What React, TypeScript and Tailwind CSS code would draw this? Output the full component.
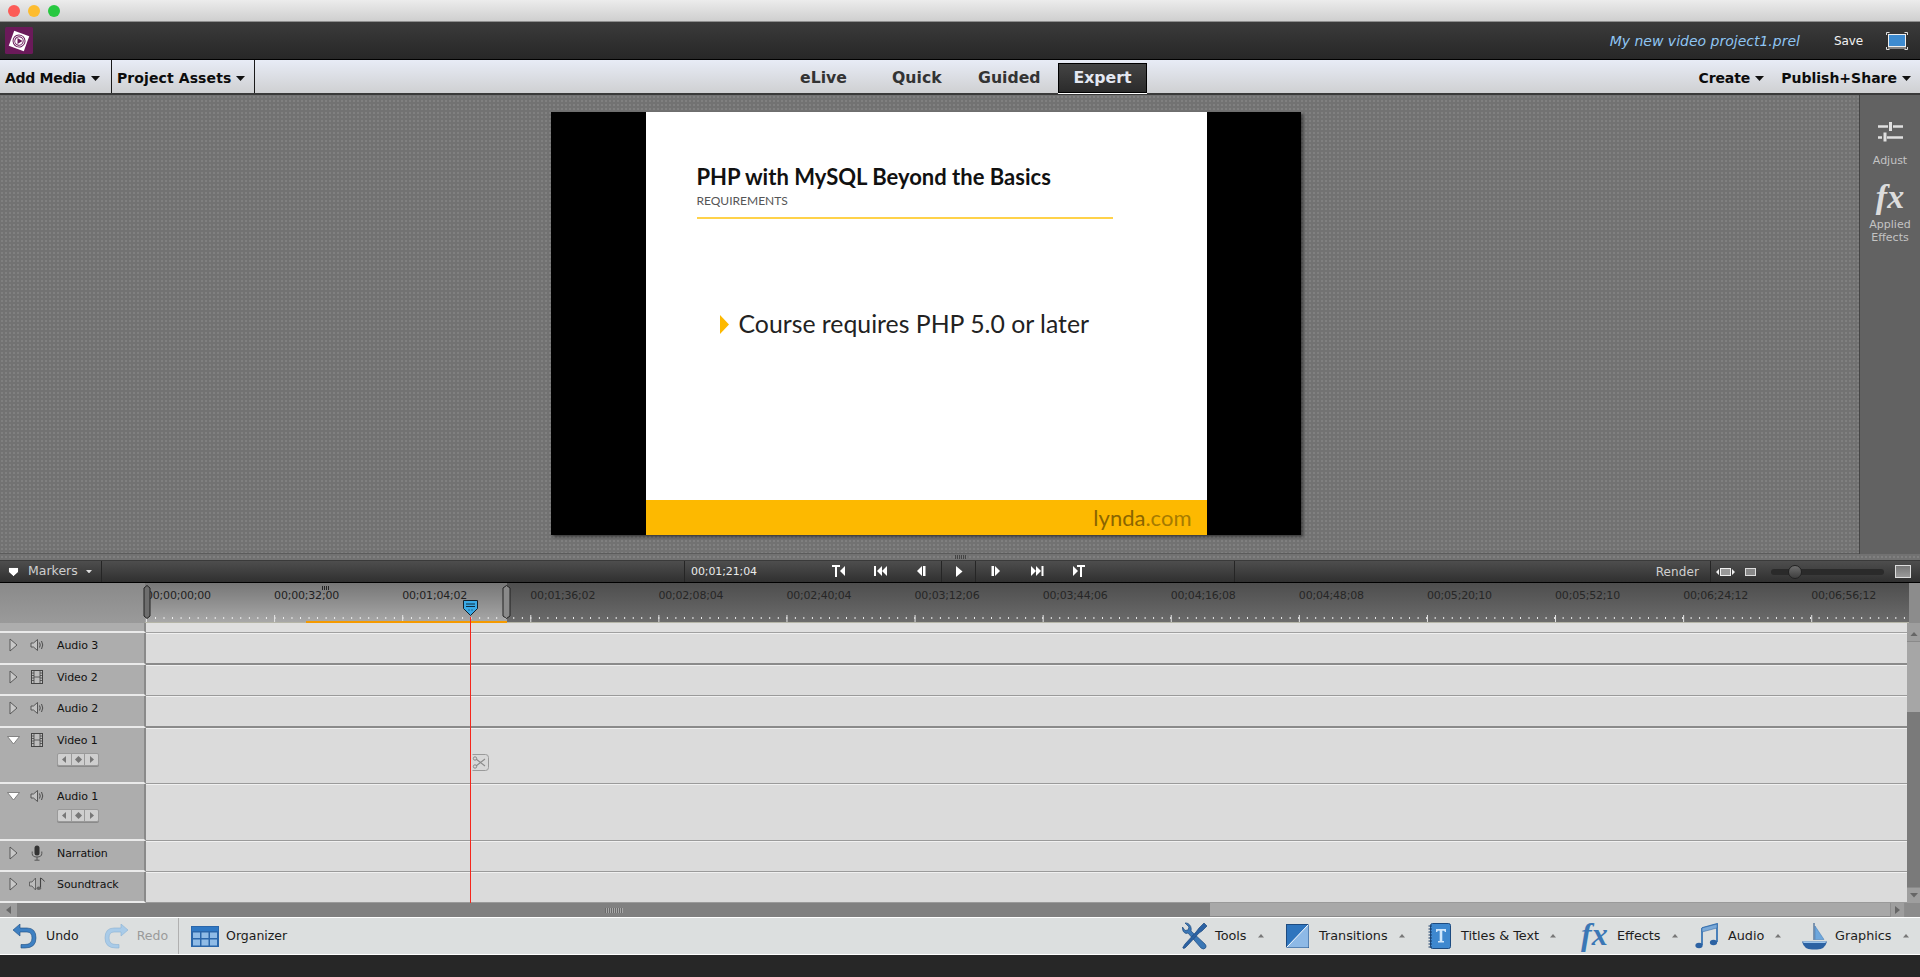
import React from "react";

const Caret = ({ c = "#111", w = 9, up = false }: { c?: string; w?: number; up?: boolean }) => (
  <svg width={w} height={w / 2 + 0.5} viewBox="0 0 10 5.5" className="shrink-0">
    <path d={up ? "M0 5.5L5 0L10 5.5Z" : "M0 0L10 0L5 5.5Z"} fill={c} />
  </svg>
);

const Logo = () => (
  <svg width="28" height="27" viewBox="0 0 28 27">
    <rect width="28" height="27" rx="1.5" fill="#6b1a5a" />
    <g transform="rotate(20 14 14)">
      <rect x="6" y="6" width="16" height="16" fill="#fff" />
      <circle cx="14" cy="14" r="6" fill="none" stroke="#6b1a5a" strokeWidth="1" />
      <circle cx="14" cy="14" r="4.2" fill="none" stroke="#6b1a5a" strokeWidth="1" />
    </g>
    <path d="M12.5 11L17.5 14L12.5 17Z" fill="#6b1a5a" />
  </svg>
);

const ScreenIcon = () => (
  <svg width="22" height="18" viewBox="0 0 22 18">
    <path d="M0.5 3V0.5H3.5M18.5 0.5H21.5V3M0.5 15V17.5H3.5M18.5 17.5H21.5V15" fill="none" stroke="#ddd" />
    <rect x="2.5" y="2.5" width="17" height="12" fill="#3d8bd0" stroke="#eee" />
    <rect x="2" y="15.5" width="18" height="1" fill="#ddd" />
  </svg>
);

const Speaker = () => (
  <svg width="15" height="14" viewBox="0 0 15 14">
    <path d="M1 5H3.5L7.5 1.5V12.5L3.5 9H1Z" fill="#c2c2c2" stroke="#4c4c4c" strokeWidth="0.9" />
    <path d="M9.5 4.5Q11 7 9.5 9.5M11.5 3Q14 7 11.5 11" fill="none" stroke="#4c4c4c" strokeWidth="1" />
  </svg>
);
const Film = () => (
  <svg width="12" height="14" viewBox="0 0 12 14">
    <rect x="0.5" y="0.5" width="11" height="13" fill="#bdbdbd" stroke="#444" />
    <path d="M3 0.5V13.5M9 0.5V13.5M3 7H9M0.5 3H3M0.5 5.5H3M0.5 8H3M0.5 10.5H3M9 3H11.5M9 5.5H11.5M9 8H11.5M9 10.5H11.5" stroke="#444" strokeWidth="0.8" fill="none" />
  </svg>
);
const Mic = () => (
  <svg width="12" height="16" viewBox="0 0 12 16">
    <rect x="3.5" y="0.5" width="5" height="10" rx="2.5" fill="#333" />
    <path d="M1.2 6.5V8.5Q1.2 12 6 12Q10.8 12 10.8 8.5V6.5M6 12V15M3.5 15.2H8.5" stroke="#555" fill="none" />
  </svg>
);
const Soundtrack = () => (
  <svg width="17" height="14" viewBox="0 0 17 14">
    <path d="M0.5 5H3L6.5 1V13L3 9H0.5Z" fill="#bcbcbc" stroke="#5c5c5c" strokeWidth="0.9" />
    <path d="M11.5 1V11" stroke="#444" strokeWidth="1.1" />
    <ellipse cx="9.8" cy="11.3" rx="2.3" ry="1.8" fill="#666" />
    <path d="M11.5 1Q14 2 15.5 4.5" stroke="#444" fill="none" />
  </svg>
);
const OpenTri = () => (
  <svg width="9" height="14" viewBox="0 0 9 14">
    <path d="M1 1L8 7L1 13Z" fill="#c8c8c8" stroke="#4e4e4e" strokeWidth="0.9" />
  </svg>
);
const DownTri = () => (
  <svg width="13" height="9" viewBox="0 0 13 9">
    <path d="M0.5 0.5H12.5L6.5 8Z" fill="#fff" stroke="#6e6e6e" strokeWidth="0.8" />
  </svg>
);
const Keys = () => (
  <div className="flex h-[13px] w-[42px] rounded-[2px] border border-[#9a9a9a] bg-[#cfcfcf] shadow-[0_1px_0_#8a8a8a]">
    <div className="flex flex-1 items-center justify-center border-r border-[#9a9a9a]">
      <svg width="4" height="7" viewBox="0 0 4 7"><path d="M4 0V7L0 3.5Z" fill="#777" /></svg>
    </div>
    <div className="flex flex-1 items-center justify-center border-r border-[#9a9a9a]">
      <svg width="7" height="7" viewBox="0 0 7 7"><path d="M3.5 0L7 3.5L3.5 7L0 3.5Z" fill="#777" /></svg>
    </div>
    <div className="flex flex-1 items-center justify-center">
      <svg width="4" height="7" viewBox="0 0 4 7"><path d="M0 0V7L4 3.5Z" fill="#777" /></svg>
    </div>
  </div>
);

const T = ({ d, w = 14 }: { d: React.ReactNode; w?: number }) => (
  <svg width={w} height="13" viewBox={`0 0 ${w} 13`} fill="#fff">{d}</svg>
);

const Transport = ({ w, children, cls = "" }: { w: string; children: React.ReactNode; cls?: string }) => (
  <div className={`flex h-full items-center justify-center ${w} ${cls}`}>{children}</div>
);

const Label = ({ children, dark = false }: { children: string; dark?: boolean }) => (
  <div className={`w-[128.1px] shrink-0 text-[11px] leading-none tracking-[-0.2px] ${dark ? "text-[#262626]" : "text-[#1f1f1f]"}`}>
    {children}
  </div>
);

const Row = ({
  h, line, icon, tri, name, keys = false,
}: { h: string; line: string; icon: React.ReactNode; tri: React.ReactNode; name: string; keys?: boolean }) => (
  <div className={`flex ${h}`}>
    <div className="w-[146px] shrink-0 border-r-2 border-b-2 border-r-[#8a8a8a] border-b-[#eaeaea] bg-[#adadad]">
      <div className="flex h-[24px] items-center">
        <div className="flex w-[26px] justify-center">{tri}</div>
        <div className="flex w-[22px] justify-center">{icon}</div>
        <div className="ml-[9px] text-[11px] leading-none tracking-[-0.1px] text-[#111]">{name}</div>
      </div>
      {keys && <div className="ml-[57px] mt-[1px]"><Keys /></div>}
    </div>
    <div className={`flex-1 border-t border-t-[#f0f0f0] bg-[#dbdbdb] ${line}`} />
  </div>
);

const Wrench = () => (
  <svg width="26" height="28" viewBox="0 0 26 28">
    <path d="M3 1L7 5L6 8L3 8.5L0.5 5Q0 10 4 11.5L6 11L19 26Q21.5 28 23.5 26Q25 24 23 22L9 9Q10 4 6 1.5Q4.5 0.8 3 1Z" fill="#3b77b5" stroke="#1e4a80" strokeWidth="0.7" />
    <path d="M22 1L25 4L20 9L17 11L6 23L3 26Q1 27 0.8 25.5L3 22L14 10L17 6Z" fill="#2c62a3" stroke="#1e4a80" strokeWidth="0.7" />
  </svg>
);
const TransIcon = () => (
  <svg width="23" height="24" viewBox="0 0 23 24">
    <rect x="0.5" y="0.5" width="22" height="23" fill="#2e75be" stroke="#1d4b80" />
    <path d="M22.5 0.5V23.5H0.5Z" fill="#8db9e6" />
    <path d="M22.5 0.5L0.5 23.5" stroke="#fff" />
  </svg>
);
const TitleIcon = () => (
  <svg width="23" height="26" viewBox="0 0 23 26">
    <rect x="2.5" y="0.5" width="20" height="25" rx="2" fill="#3e88cf" stroke="#1d4b80" />
    <path d="M8 6H18V9H17L16 7.8H14.3V18H16V19.5H10V18H11.7V7.8H10L9 9H8Z" fill="#cfe6fb" />
    <path d="M0.5 3H4M0.5 6H4M0.5 9H4M0.5 12H4M0.5 15H4M0.5 18H4M0.5 21H4M0.5 24H4" stroke="#163a66" />
  </svg>
);
const Note = () => (
  <svg width="23" height="26" viewBox="0 0 23 26">
    <path d="M7 5L22 1V19" fill="none" stroke="#3b77b5" strokeWidth="1.8" />
    <path d="M7 5V22" stroke="#3b77b5" strokeWidth="1.8" />
    <path d="M7 5L22 1V5L7 9Z" fill="#7aa9d8" stroke="#2c62a3" strokeWidth="0.5" />
    <ellipse cx="4" cy="22.5" rx="3.6" ry="2.8" fill="#2c62a3" />
    <ellipse cx="18.5" cy="19.5" rx="3.6" ry="2.8" fill="#2c62a3" />
  </svg>
);
const Boat = () => (
  <svg width="25" height="27" viewBox="0 0 25 27">
    <path d="M12 0V17" stroke="#1d4b80" strokeWidth="1" />
    <path d="M13 3L22 16.5H13Z" fill="#6ea7dc" stroke="#3b77b5" strokeWidth="0.5" />
    <path d="M0 18.5H25Q23 26.5 15 26.5H10Q2 26.5 0 18.5Z" fill="#2c62a3" />
    <path d="M1 18.5H24L23.5 20H1.5Z" fill="#9cc4ea" />
  </svg>
);

const ToolItem = ({ w, icon, label, box = "w-[33px]" }: { w: string; icon: React.ReactNode; label: string; box?: string }) => (
  <div className={`flex items-center ${w}`}>
    <div className={`flex shrink-0 items-center ${box}`}>{icon}</div>
    <span className="text-[12.8px] leading-none text-[#1d1d1d]">{label}</span>
    <span className="ml-[11px]"><Caret c="#777" w={6} up /></span>
  </div>
);

export default function App() {
  return (
    <div className="relative flex h-[977px] w-[1920px] flex-col overflow-hidden bg-[#272727] font-['DejaVu_Sans',sans-serif]">
      {/* window title bar */}
      <div className="flex h-[22px] shrink-0 items-center gap-[8px] border-b border-[#8e8e8e] bg-gradient-to-b from-[#ececec] to-[#cfcfcf] pl-[8px]">
        <div className="h-[12px] w-[12px] rounded-full bg-[#fc5b57]" />
        <div className="h-[12px] w-[12px] rounded-full bg-[#fdbc2f]" />
        <div className="h-[12px] w-[12px] rounded-full bg-[#27c840]" />
      </div>

      {/* dark app bar */}
      <div className="flex h-[38px] shrink-0 items-center border-b border-black bg-gradient-to-b from-[#3b3b3b] to-[#272727] pl-[5px] pr-[12px]">
        <Logo />
        <span className="ml-auto text-[14px] italic leading-none text-[#8fc5f2]">My new video project1.prel</span>
        <span className="ml-[34px] text-[12px] leading-none tracking-[-0.1px] text-[#f2f2f2]">Save</span>
        <span className="ml-[23px] flex"><ScreenIcon /></span>
      </div>

      {/* menu bar */}
      <div className="flex h-[35px] shrink-0 items-center border-b-2 border-[#3a3a3a] bg-gradient-to-b from-[#e8ecf6] to-[#cfd0d2] text-[14px] font-bold leading-none text-[#0c0c0c]">
        <div className="flex h-full w-[112px] items-center gap-[5px] border-r border-[#1a1a1a] pl-[5px] pt-[3px]">
          <span className="tracking-[-0.3px]">Add Media</span><Caret />
        </div>
        <div className="flex h-full w-[143px] items-center gap-[5px] border-r border-[#1a1a1a] pl-[5px] pt-[3px]">
          <span className="tracking-[0.1px]">Project Assets</span><Caret />
        </div>
        <div className="ml-[545px] flex items-center pt-[2px] text-[15.7px] text-[#333]">
          <span className="w-[92px]">eLive</span>
          <span className="w-[86px]">Quick</span>
          <span className="w-[80px]">Guided</span>
          <span className="flex h-[30px] w-[89px] items-center justify-center border border-black bg-gradient-to-b from-[#444] to-[#2b2b2b] text-[#e4e8f2] shadow-[0_1px_0_#fff]">Expert</span>
        </div>
        <div className="ml-auto flex items-center gap-[5px] pt-[3px]">
          <span className="tracking-[-0.1px]">Create</span><Caret />
        </div>
        <div className="ml-[17px] mr-[9px] flex items-center gap-[5px] pt-[3px]">
          <span>Publish+Share</span><Caret />
        </div>
      </div>

      {/* monitor */}
      <div className="flex h-[465px] shrink-0 flex-col bg-[#727272] bg-[radial-gradient(circle,#808080_1px,transparent_1.2px)] bg-[length:4px_4px]">
        <div className="flex h-[459px] border-b border-[#5c5c5c]">
          <div className="ml-[551px] mt-[17px] flex h-[423px] w-[750px] justify-center bg-black shadow-[2px_2px_3px_rgba(0,0,0,0.5)]">
            <div className="flex h-full w-[561px] flex-col bg-white font-['Lato',sans-serif]">
              <div className="flex-1 pl-[51px] pt-[52px]">
                <div className="text-[22px] font-bold leading-[26px] text-[#111]">PHP with MySQL Beyond the Basics</div>
                <div className="mt-[4px] text-[12px] leading-[14px] text-[#555]">REQUIREMENTS</div>
                <div className="mt-[9px] h-[2px] w-[416px] bg-[#ffd24a]" />
                <div className="ml-[23px] mt-[90px] flex items-center">
                  <svg width="9" height="19" viewBox="0 0 9 19"><path d="M0 0L9 9.5L0 19Z" fill="#fdb900" /></svg>
                  <span className="ml-[10px] text-[24.8px] leading-[30px] text-[#222]">Course requires PHP 5.0 or later</span>
                </div>
              </div>
              <div className="flex h-[35px] items-center justify-end bg-[#fdb900] pr-[15px] text-[22px] leading-none">
                <span className="text-[#8a6500]">lynda</span><span className="text-[#a67b00]">.com</span>
              </div>
            </div>
          </div>
          <div className="ml-auto flex h-[459px] w-[61px] flex-col items-center border-l border-[#444] bg-[#626262] pt-[27px] text-[11px] leading-[13px] text-[#c4c4c4]">
            <svg width="25" height="20" viewBox="0 0 25 20">
              <path d="M0 4.5H10M15 4.5H25M0 15.5H4M9 15.5H25" stroke="#e0e0e0" strokeWidth="2.5" />
              <rect x="11" y="0" width="3" height="9" fill="#e0e0e0" />
              <rect x="5.5" y="10.5" width="3" height="9" fill="#e0e0e0" />
            </svg>
            <span className="mt-[12px]">Adjust</span>
            <span className="mt-[14px] font-['Liberation_Serif',serif] text-[34px] font-bold italic leading-[32px] text-[#dcdcdc]">fx</span>
            <span className="mt-[5px] text-center">Applied<br />Effects</span>
          </div>
        </div>
        <div className="flex h-[5px] items-center justify-center">
          <div className="h-[4px] w-[11px] bg-[repeating-linear-gradient(90deg,#444_0_1px,transparent_1px_2px)]" />
        </div>
      </div>

      {/* timeline transport bar */}
      <div className="flex h-[23px] shrink-0 items-center border-y border-y-black border-t-[#3a3a3a] bg-gradient-to-b from-[#4e4e4e] to-[#303030] text-[#d8d8d8]">
        <div className="flex h-full w-[102px] items-center border-r border-[#252525] pl-[8px]">
          <svg width="11" height="10" viewBox="0 0 11 10"><path d="M0.5 0.5H10.5V5L5.5 9.5L0.5 5Z" fill="#fff" stroke="#111" strokeWidth="0.6" /></svg>
          <span className="ml-[9px] text-[12.5px] leading-none text-[#cfcfcf]">Markers</span>
          <span className="ml-[8px]"><Caret c="#ddd" w={6} /></span>
        </div>
        <div className="h-full w-[583px] border-r border-[#252525]" />
        <div className="flex h-full w-[133px] items-center pl-[6px] text-[11px] leading-none tracking-[-0.1px] text-[#eaeaea]">00;01;21;04</div>
        <Transport w="w-[42px]"><T d={<><path d="M0 0H8V2H5V12H3V2H0Z" /><path d="M13 1V11L8 6Z" /></>} /></Transport>
        <Transport w="w-[42px]"><T d={<><rect x="0" y="1" width="2" height="10" /><path d="M8 1V11L3 6Z" /><path d="M13 1V11L8 6Z" /></>} /></Transport>
        <Transport w="w-[39px]"><T w={10} d={<><path d="M5 1V11L0 6Z" /><rect x="6" y="1" width="2.5" height="10" /></>} /></Transport>
        <Transport w="w-[35px]" cls="border-x border-[#252525]"><T w={8} d={<path d="M1 1V12L7.5 6.5Z" />} /></Transport>
        <Transport w="w-[40px]"><T w={10} d={<><rect x="0.5" y="1" width="2.5" height="10" /><path d="M4 1V11L9 6Z" /></>} /></Transport>
        <Transport w="w-[42px]"><T d={<><path d="M1 1V11L6 6Z" /><path d="M6 1V11L11 6Z" /><rect x="11.5" y="1" width="2" height="10" /></>} /></Transport>
        <Transport w="w-[42px]"><T d={<><path d="M1 1V11L6 6Z" /><path d="M5 0H13V2H10V12H8V2H5Z" /></>} /></Transport>
        <div className="h-full w-[135px] border-r border-[#252525]" />
        <div className="flex h-full flex-1 items-center justify-end pr-[9px]">
          <span className="text-[12px] leading-none tracking-[0.1px] text-[#d0d0d0]">Render</span>
          <div className="ml-[11px] h-full border-r border-[#252525]" />
          <svg className="ml-[5px]" width="19" height="8" viewBox="0 0 19 8">
            <path d="M3 1V7L0 4ZM16 1V7L19 4Z" fill="#eee" />
            <rect x="4.5" y="0.5" width="10" height="7" fill="#999" stroke="#eee" />
          </svg>
          <div className="ml-[10px] h-[8px] w-[11px] border border-[#ddd] bg-[#888]" />
          <div className="relative ml-[15px] h-[6px] w-[113px] rounded-full bg-[#2a2a2a]">
            <div className="absolute left-[17px] top-[-4px] h-[14px] w-[14px] rounded-full border border-[#222] bg-gradient-to-b from-[#6e6e6e] to-[#3e3e3e]" />
          </div>
          <div className="ml-[11px] h-[13px] w-[16px] border border-[#ddd] bg-gradient-to-b from-[#777] to-[#9a9a9a]" />
        </div>
      </div>

      {/* timeline */}
      <div className="relative flex h-[320px] shrink-0 flex-col">
        {/* ruler */}
        <div className="flex h-[40px] shrink-0 bg-[#8c8c8c]">
          <div className="w-[145px] shrink-0 bg-gradient-to-b from-[#8a8a8a] to-[#9a9a9a]" />
          <div className="relative w-[1764px] shrink-0 bg-gradient-to-b from-[#4e4e4e] to-[#6c6c6c]">
            <div className="absolute inset-y-0 left-0 w-[362px] bg-gradient-to-b from-[#777] to-[#a9a9a9]" />
            <div className="relative flex pl-[1px] pt-[7px]">
              <Label>00;00;00;00</Label>
              <Label>00;00;32;00</Label>
              <Label>00;01;04;02</Label>
              <Label dark>00;01;36;02</Label>
              <Label dark>00;02;08;04</Label>
              <Label dark>00;02;40;04</Label>
              <Label dark>00;03;12;06</Label>
              <Label dark>00;03;44;06</Label>
              <Label dark>00;04;16;08</Label>
              <Label dark>00;04;48;08</Label>
              <Label dark>00;05;20;10</Label>
              <Label dark>00;05;52;10</Label>
              <Label dark>00;06;24;12</Label>
              <Label dark>00;06;56;12</Label>
            </div>
            <div className="absolute bottom-[4px] left-[9.5px] right-0 h-[2px] bg-[linear-gradient(90deg,#eee_1px,transparent_1px)] bg-[length:8.54px_2px]" />
            <div className="absolute bottom-[1px] left-[1px] right-0 h-[7px] bg-[linear-gradient(90deg,#e4e4e4_1px,transparent_1px)] bg-[length:128.1px_7px]" />
            <div className="absolute bottom-0 left-0 right-0 h-[1px] bg-[#b5b5a8]" />
            <div className="absolute bottom-0 left-[161px] h-[2px] w-[201px] bg-[#f59a00]" />
            {/* work area handles */}
            <svg className="absolute left-[-2px] top-[2px]" width="8" height="34" viewBox="0 0 8 34">
              <path d="M1 3L4 0.5L7 3V31L4 33.5L1 31Z" fill="#6e6e6e" stroke="#222" />
            </svg>
            <svg className="absolute left-[357px] top-[2px]" width="9" height="34" viewBox="0 0 9 34">
              <path d="M1 3L4.5 0.5L8 3V31L4.5 33.5L1 31Z" fill="#8a8a8a" stroke="#222" />
            </svg>
            <div className="absolute left-[177px] top-[3px] h-[4px] w-[8px] bg-[repeating-linear-gradient(90deg,#222_0_1px,transparent_1px_2px)]" />
          </div>
        </div>

        {/* tracks + vertical scrollbar */}
        <div className="flex h-[280px]">
          <div className="flex w-[1907px] shrink-0 flex-col">
            <div className="flex h-[10px]">
              <div className="w-[146px] shrink-0 border-r-2 border-b-2 border-r-[#8a8a8a] border-b-[#eaeaea] bg-[#adadad]" />
              <div className="flex-1 border-b border-[#a0a0a0] bg-[#dfdfdf]" />
            </div>
            <Row h="h-[32px]" line="border-b-2 border-b-[#8a8a8a]" tri={<OpenTri />} icon={<Speaker />} name="Audio 3" />
            <Row h="h-[31px]" line="border-b border-b-[#9a9a9a]" tri={<OpenTri />} icon={<Film />} name="Video 2" />
            <Row h="h-[32px]" line="border-b-2 border-b-[#8a8a8a]" tri={<OpenTri />} icon={<Speaker />} name="Audio 2" />
            <Row h="h-[56px]" line="border-b border-b-[#9a9a9a]" tri={<DownTri />} icon={<Film />} name="Video 1" keys />
            <Row h="h-[57px]" line="border-b border-b-[#9a9a9a]" tri={<DownTri />} icon={<Speaker />} name="Audio 1" keys />
            <Row h="h-[31px]" line="border-b border-b-[#9a9a9a]" tri={<OpenTri />} icon={<Mic />} name="Narration" />
            <Row h="h-[31px]" line="border-b border-b-[#9a9a9a]" tri={<OpenTri />} icon={<Soundtrack />} name="Soundtrack" />
          </div>
          <div className="flex w-[13px] shrink-0 flex-col bg-[#7a7a7a]">
            <div className="flex h-[18px] shrink-0 items-end justify-center bg-[#9e9e9e] pb-[5px]"><Caret c="#666" w={8} up /></div>
            <div className="h-[71px] shrink-0 border-t border-[#8a8a8a] bg-[#a6a6a6]" />
            <div className="mt-auto flex h-[16px] shrink-0 items-center justify-center border-t border-[#8a8a8a] bg-[#9e9e9e]"><Caret c="#666" w={8} /></div>
          </div>
        </div>

        {/* playhead */}
        <div className="absolute bottom-0 left-[470px] top-[34px] w-[1px] bg-[#f5261c]" />
        <svg className="absolute left-[463px] top-[17px]" width="15" height="16" viewBox="0 0 15 16">
          <path d="M0.5 0.5H14.5V8.5L7.5 15.5L0.5 8.5Z" fill="#39a9e6" stroke="#10202c" />
          <path d="M3 4H12M3 6.5H12" stroke="#0d2a3d" />
          <path d="M6 9V11M9 9V11" stroke="#1f6e9c" />
        </svg>
        <svg className="absolute left-[472px] top-[171px]" width="17" height="17" viewBox="0 0 17 17">
          <path d="M0.5 0.5H13.5Q16.5 0.5 16.5 3.5V13.5Q16.5 16.5 13.5 16.5H0.5" fill="#d8d8d8" stroke="#9a9a9a" />
          <path d="M4 5L13 12M4 12L13 5" stroke="#8a8a8a" strokeWidth="1.1" />
          <circle cx="3" cy="4.5" r="1.7" fill="none" stroke="#8a8a8a" />
          <circle cx="3" cy="12.5" r="1.7" fill="none" stroke="#8a8a8a" />
        </svg>
      </div>

      {/* horizontal scrollbar */}
      <div className="flex h-[14px] shrink-0 items-center bg-[#808080]">
        <div className="flex h-full w-[17px] items-center justify-center bg-[#9e9e9e]">
          <svg width="5" height="8" viewBox="0 0 5 8"><path d="M5 0V8L0 4Z" fill="#666" /></svg>
        </div>
        <div className="flex h-full w-[1193px] items-center pl-[588px]">
          <div className="h-[5px] w-[18px] bg-[#a8a8a8] bg-[repeating-linear-gradient(90deg,#6a6a6a_0_1px,transparent_1px_2px)]" />
        </div>
        <div className="h-full w-[680px] border-b border-[#8a8a8a] bg-[#a8a8a8]" />
        <div className="flex h-full w-[15px] items-center justify-center border-x border-[#8e8e8e] bg-[#9e9e9e]">
          <svg width="5" height="8" viewBox="0 0 5 8"><path d="M0 0V8L5 4Z" fill="#666" /></svg>
        </div>
        <div className="h-full flex-1 bg-[#8c8c8c]" />
      </div>

      {/* bottom toolbar */}
      <div className="flex h-[38px] shrink-0 items-center border-y border-y-white bg-[#dcdfdf] text-[12.5px] leading-none">
        <svg className="ml-[13px]" width="24" height="25" viewBox="0 0 24 25">
          <path d="M7 0V4H14Q23 4 23 14Q23 24 12 24H8V20.5H12Q19 20.5 19 14Q19 8 14 8H7V12L0 6Z" fill="#3e80c2" stroke="#1d4b80" strokeWidth="0.6" />
        </svg>
        <span className="ml-[9px] text-[#1a1a1a]">Undo</span>
        <svg className="ml-[25px]" width="24" height="25" viewBox="0 0 24 25">
          <path d="M17 0V4H10Q1 4 1 14Q1 24 12 24H15V20.5H12Q5 20.5 5 14Q5 8 10 8H17V12L24 6Z" fill="#a9cbe8" stroke="#8bb2d3" strokeWidth="0.6" />
        </svg>
        <span className="ml-[9px] text-[#9a9a9a]">Redo</span>
        <div className="ml-[10px] h-full border-r border-[#b0b0b0]" />
        <svg className="ml-[12px]" width="28" height="21" viewBox="0 0 28 21">
          <rect width="28" height="21" fill="#2a66aa" />
          <rect x="1" y="1" width="26" height="4" fill="#2f78c4" />
          <path d="M2 6.5H9V12H2ZM10.5 6.5H17.5V12H10.5ZM19 6.5H26V12H19ZM2 13.5H9V19.5H2ZM10.5 13.5H17.5V19.5H10.5ZM19 13.5H26V19.5H19Z" fill="#8fbbe6" />
        </svg>
        <span className="ml-[7px] text-[#1a1a1a]">Organizer</span>
        <div className="ml-auto flex pr-[15px]">
          <ToolItem w="w-[104px]" icon={<Wrench />} label="Tools" />
          <ToolItem w="w-[142px]" icon={<TransIcon />} label="Transitions" />
          <ToolItem w="w-[153px]" icon={<TitleIcon />} label="Titles & Text" />
          <ToolItem w="w-[114px]" box="w-[36px] pb-[4px]" icon={<span className="font-['Liberation_Serif',serif] text-[32px] font-bold italic leading-[28px] text-[#3b77b5]">fx</span>} label="Effects" />
          <ToolItem w="w-[107px]" icon={<Note />} label="Audio" />
          <ToolItem w="w-[103px]" icon={<Boat />} label="Graphics" />
        </div>
      </div>

      {/* bottom dark strip */}
      <div className="flex-1 bg-[#272727]" />
    </div>
  );
}
